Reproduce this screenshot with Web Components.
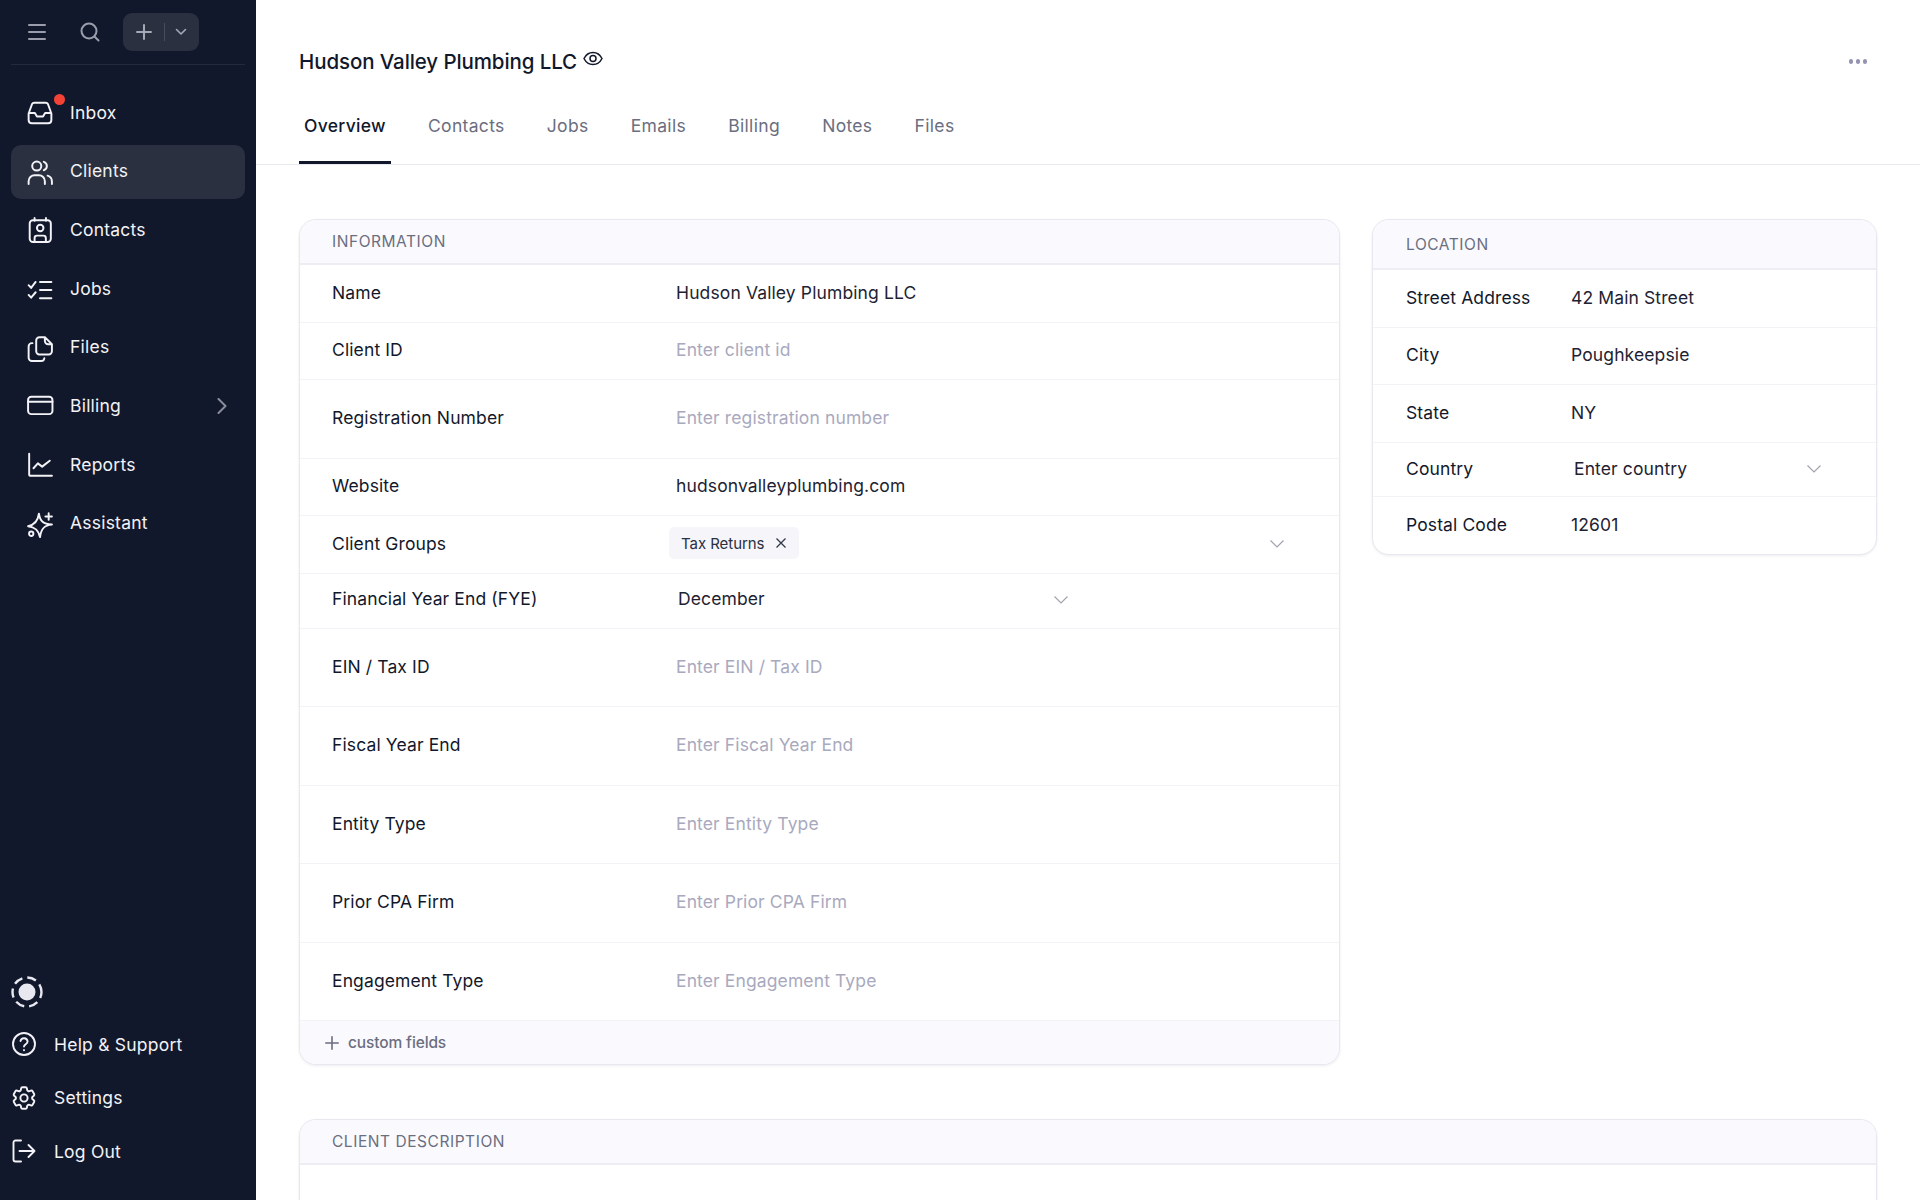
<!DOCTYPE html>
<html lang="en"><head><meta charset="utf-8"><title>Hudson Valley Plumbing LLC</title>
<style>
html,body{margin:0;height:100%;background:#fff;overflow:hidden}
body{font-family:Inter,"Noto Sans","Liberation Sans",sans-serif}
</style></head><body>
<app-shell>
  <side-nav slot="nav">
    <nav-item icon="inbox" dot>Inbox</nav-item>
    <nav-item icon="users" active>Clients</nav-item>
    <nav-item icon="contacts">Contacts</nav-item>
    <nav-item icon="jobs">Jobs</nav-item>
    <nav-item icon="files">Files</nav-item>
    <nav-item icon="card" chevron>Billing</nav-item>
    <nav-item icon="chart">Reports</nav-item>
    <nav-item icon="spark">Assistant</nav-item>
    <foot-item slot="foot" icon="help">Help &amp; Support</foot-item>
    <foot-item slot="foot" icon="gear">Settings</foot-item>
    <foot-item slot="foot" icon="logout">Log Out</foot-item>
  </side-nav>
  <page-head slot="head" title-text="Hudson Valley Plumbing LLC">
    <tab-item active>Overview</tab-item>
    <tab-item>Contacts</tab-item>
    <tab-item>Jobs</tab-item>
    <tab-item>Emails</tab-item>
    <tab-item>Billing</tab-item>
    <tab-item>Notes</tab-item>
    <tab-item>Files</tab-item>
  </page-head>
  <data-card heading="Information" head-h="45" pad="32" slot="info">
    <field-row label="Name" h="58">Hudson Valley Plumbing LLC</field-row>
    <field-row label="Client ID" h="57" placeholder>Enter client id</field-row>
    <field-row label="Registration Number" h="79" placeholder>Enter registration number</field-row>
    <field-row label="Website" h="57">hudsonvalleyplumbing.com</field-row>
    <field-row label="Client Groups" h="58" nudge="-7" caret="1277"><tag-chip>Tax Returns</tag-chip></field-row>
    <field-row label="Financial Year End (FYE)" h="55" nudge="2" up="5" caret="1061">December</field-row>
    <field-row label="EIN / Tax ID" h="78" placeholder>Enter EIN / Tax ID</field-row>
    <field-row label="Fiscal Year End" h="79" placeholder>Enter Fiscal Year End</field-row>
    <field-row label="Entity Type" h="78" placeholder>Enter Entity Type</field-row>
    <field-row label="Prior CPA Firm" h="79" placeholder>Enter Prior CPA Firm</field-row>
    <field-row label="Engagement Type" h="78" placeholder>Enter Engagement Type</field-row>
    <card-foot>custom fields</card-foot>
  </data-card>
  <data-card heading="Location" head-h="50" pad="33" slot="loc">
    <field-row label="Street Address" h="58" pad="33">42 Main Street</field-row>
    <field-row label="City" h="57" pad="33">Poughkeepsie</field-row>
    <field-row label="State" h="58" pad="33">NY</field-row>
    <field-row label="Country" h="54" pad="33" nudge="3" caret="1814">Enter country</field-row>
    <field-row label="Postal Code" h="57" pad="33" last>12601</field-row>
  </data-card>
  <data-card heading="Client Description" head-h="45" pad="32" slot="desc" style="height:200px"></data-card>
</app-shell>
<script>
const ICONS={
 inbox:'<path d="M1.500 12.500 4.600 3.900Q5.200 2.500 6.800 2.500H17.200Q18.800 2.500 19.400 3.900L22.500 12.500V18.500Q22.500 21.500 19.500 21.500H4.500Q1.500 21.500 1.500 18.500ZM1.800 12H7.300L9.200 15.200H14.800L16.700 12H22.200"/>',
 users:'<circle cx="9" cy="6.500" r="4.200"/><path d="M1.500 23V20.500A5.500 5.500 0 0 1 7 15H11A5.500 5.500 0 0 1 16.500 20.500V23M15.500 2.600A4.100 4.100 0 0 1 15.500 10.400M19 15.400A5.500 5.500 0 0 1 23 20.500V23"/>',
 contacts:'<rect x="2.500" y="3" width="19.500" height="20" rx="3"/><path d="M7 1V3.500M17.500 1V3.500"/><circle cx="12.200" cy="10.200" r="3"/><path d="M7 22.500V19.500Q7 17.200 9.200 17.200H15.200Q17.400 17.200 17.400 19.500V22.500"/>',
 jobs:'<path d="M1.500 8.500 3.800 11 8 5.500M1.500 17.500 3.800 20 8 15M12 5.500H22.500M12 13H22.500M12 20.500H22.500"/>',
 files:'<path d="M8.500 5A3 3 0 0 1 11.500 2H16.500L23 8.500V15A3 3 0 0 1 20 18H11.500A3 3 0 0 1 8.500 15ZM16.500 2V5.500A3 3 0 0 0 19.500 8.500H23M5 7.500H4.500A3 3 0 0 0 1.500 10.500V21A3 3 0 0 0 4.500 24H13A3 3 0 0 0 16 21.500"/>',
 card:'<rect x="1" y="3.500" width="22.500" height="16" rx="3"/><path d="M1 8H23.500"/>',
 chart:'<path d="M2 1.500V20.500A1.500 1.500 0 0 0 3.500 22H23M6 15 10 10.500 14 13.500 21 8"/>',
 spark:'<path d="M11 2.500C12 9.500 15 12 23 12.500C16 13 13 16.500 12 24C10.500 17.500 7.500 14.800 1 14C6.500 13 10 10 11 2.500Z"/><path d="M20 2V8M17 5H23"/><circle cx="3.900" cy="21" r="2"/>',
 help:'<circle cx="12" cy="12" r="11"/><path d="M8.500 9A3.600 3.600 0 0 1 15.600 9.500C15.600 12 12 12.300 12 14.500M12 18V18.200"/>',
 gear:'<g transform="translate(12 12) scale(1.200) translate(-12 -12)" stroke-width="1.600"><path d="M9.594 3.940c.09-.542.56-.94 1.110-.94h2.593c.55 0 1.020.398 1.110.94l.213 1.281c.063.374.313.686.645.870.074.040.147.083.22.127.325.196.72.257 1.075.124l1.217-.456a1.125 1.125 0 0 1 1.370.49l1.296 2.247a1.125 1.125 0 0 1-.26 1.431l-1.003.827c-.293.241-.438.613-.43.992a7.723 7.723 0 0 1 0 .255c-.008.378.137.75.43.991l1.004.827c.424.35.534.955.26 1.430l-1.298 2.247a1.125 1.125 0 0 1-1.369.491l-1.217-.456c-.355-.133-.75-.072-1.076.124a6.470 6.470 0 0 1-.22.128c-.331.183-.581.495-.644.869l-.213 1.281c-.09.543-.56.94-1.110.94h-2.594c-.55 0-1.019-.398-1.110-.94l-.213-1.281c-.062-.374-.312-.686-.644-.870a6.520 6.520 0 0 1-.22-.127c-.325-.196-.72-.257-1.076-.124l-1.217.456a1.125 1.125 0 0 1-1.369-.49l-1.297-2.247a1.125 1.125 0 0 1 .26-1.431l1.004-.827c.292-.24.437-.613.43-.991a6.932 6.932 0 0 1 0-.255c.007-.38-.138-.751-.43-.992l-1.004-.827a1.125 1.125 0 0 1-.26-1.430l1.297-2.247a1.125 1.125 0 0 1 1.370-.491l1.216.456c.356.133.751.072 1.076-.124.072-.044.146-.086.22-.128.332-.183.582-.495.644-.869l.214-1.280Z"/><circle cx="12" cy="12" r="3"/></g>',
 logout:'<path d="M9 1.500H3.500A2 2 0 0 0 1.500 3.500V20.500A2 2 0 0 0 3.500 22.500H9M7.500 12H22.500M16.500 6 22.500 12 16.500 18"/>'
};
function def(name,html,init){customElements.define(name,class extends HTMLElement{
  constructor(){super();this.attachShadow({mode:'open'}).innerHTML=html;}
  connectedCallback(){init&&init.call(this,this.shadowRoot);}
});}
const svg=(n,w=24,h=24,sw=2)=>`<svg width="${w}" height="${h}" viewBox="0 0 24 24" fill="none" stroke="currentColor" stroke-width="${sw}" stroke-linecap="round" stroke-linejoin="round" overflow="visible">${ICONS[n]}</svg>`;

def('app-shell',`<style>
:host{display:flex;width:1920px;height:1200px;overflow:hidden;background:#fff}
.nav{flex:0 0 256px;display:flex}
main{flex:1;min-width:0;display:flex;flex-direction:column}
.body{padding:54px 43px 0 43px;display:grid;grid-template-columns:1041px 505px;column-gap:32px;row-gap:54px;align-items:start}
.desc{grid-column:1/3}
</style><div class="nav"><slot name="nav"></slot></div>
<main><slot name="head"></slot><div class="body"><slot name="info"></slot><slot name="loc"></slot><div class="desc"><slot name="desc"></slot></div></div></main>`);

def('side-nav',`<style>
:host{display:flex;flex-direction:column;width:256px;height:1200px;background:#12182B;color:#F2F2F7;box-sizing:border-box}
.top{display:flex;align-items:center;height:65px;margin:0 11px;border-bottom:1px solid #232A3C;box-sizing:border-box;padding-left:17px}
.burger{width:18px;display:flex;flex-direction:column;gap:5px}
.burger i{display:block;height:2px;background:#9A9DAB;border-radius:1px}
.search{margin-left:33px;width:22px;height:22px;color:#9A9DAB;display:flex}
.add{margin-left:22px;width:76px;height:38px;border-radius:9px;background:#2A3040;display:flex;align-items:center;color:#A5A8B5}
.add .plus{width:41px;display:flex;justify-content:center}
.add .sep{width:1px;height:18px;background:#474C5B}
.add .ch{flex:1;display:flex;justify-content:center;padding-right:3px}
.items{display:flex;flex-direction:column;gap:4.700px;padding:21px 11px 0}
.foot{margin-top:auto;padding:0 0 29px}
.ring{padding:0 0 0 11px;height:32px;margin-bottom:16px;display:flex}
.footitems{display:flex;flex-direction:column;gap:13.300px}
</style>
<div class="top"><div class="burger"><i></i><i></i><i></i></div>
<div class="search"><svg width="22" height="22" viewBox="0 0 22 22" fill="none" stroke="currentColor" stroke-width="2" stroke-linecap="round"><circle cx="10" cy="10" r="7.500"/><path d="M15.700 15.700 19.500 19.500"/></svg></div>
<div class="add"><div class="plus"><svg width="16" height="16" viewBox="0 0 16 16" stroke="currentColor" stroke-width="2" stroke-linecap="round"><path d="M8 1V15M1 8H15"/></svg></div><div class="sep"></div><div class="ch"><svg width="12" height="8" viewBox="0 0 12 8" fill="none" stroke="currentColor" stroke-width="1.600" stroke-linecap="round" stroke-linejoin="round"><path d="M1.500 1.500 6 6 10.500 1.500"/></svg></div></div></div>
<div class="items"><slot></slot></div>
<div class="foot"><div class="ring"><svg width="32" height="32" viewBox="0 0 32 32" fill="none"><circle cx="16" cy="16" r="14.500" stroke="#E8E8F0" stroke-width="2.400" stroke-dasharray="9.200 5.040" stroke-dashoffset="3"/><circle cx="16" cy="16" r="8.500" fill="#E8E8F0"/></svg></div><div class="footitems"><slot name="foot"></slot></div></div>`);

def('nav-item',`<style>
:host{display:flex;align-items:center;height:54px;box-sizing:border-box;padding:0 0 2px 15.500px;border-radius:10px;position:relative;font-size:17.500px;font-weight:400;letter-spacing:.22px}
:host([active]){background:#2A3040}
.ic{width:26px;height:26px;margin-top:2px;margin-right:17.500px;display:flex}
.dot{position:absolute;left:43px;top:8px;width:11px;height:11px;border-radius:50%;background:#F44336}
.ch{position:absolute;left:206px;top:19px;color:#8A8D9C;display:flex}
</style><span class="ic"></span><slot></slot>`,function(r){
  r.querySelector('.ic').innerHTML=svg(this.getAttribute('icon'),26,26,1.8);
  if(this.hasAttribute('dot')&&!r.querySelector('.dot')){r.appendChild(Object.assign(document.createElement('span'),{className:'dot'}));}
  if(this.hasAttribute('chevron')&&!r.querySelector('.ch')){const s=document.createElement('span');s.className='ch';s.innerHTML='<svg width="10" height="16" viewBox="0 0 10 16" fill="none" stroke="currentColor" stroke-width="2" stroke-linecap="round" stroke-linejoin="round"><path d="M1.500 1 8.500 8 1.500 15"/></svg>';r.appendChild(s);}
});

def('foot-item',`<style>
:host{display:flex;align-items:center;height:40px;padding-left:12px;font-size:17.500px;letter-spacing:.22px}
.ic{width:24px;height:24px;margin-right:18px;display:flex}
</style><span class="ic"></span><slot></slot>`,function(r){r.querySelector('.ic').innerHTML=svg(this.getAttribute('icon'),24,24,1.9);});

def('page-head',`<style>
:host{display:block;height:165px;box-sizing:border-box;border-bottom:1px solid #E9E9F0;padding:0 43px;position:relative}
.t{display:flex;align-items:flex-start;height:94px;padding-top:48px;box-sizing:border-box;font-size:20.500px;font-weight:500;color:#12182B;line-height:28px;letter-spacing:-.1px}
.eye{margin:2px 0 0 6px;color:#12182B;display:flex}
.more{position:absolute;right:53px;top:59px;display:flex;gap:2.500px}
.more i{width:4.500px;height:4.500px;border-radius:50%;background:#9494B0}
.tabs{display:flex;gap:32.200px;height:70px}
</style><div class="t"><span id="t"></span><span class="eye"><svg width="20" height="20" viewBox="0 0 20 20" fill="none" stroke="currentColor" stroke-width="1.500"><path d="M1 8.500C3 4.500 6.200 2.500 10 2.500S17 4.500 19 8.500C17 12.500 13.800 14.500 10 14.500S3 12.500 1 8.500Z"/><circle cx="10" cy="8.500" r="3"/></svg></span></div>
<div class="more"><i></i><i></i><i></i></div><div class="tabs"><slot></slot></div>`,function(r){r.getElementById('t').textContent=this.getAttribute('title-text');});

def('tab-item',`<style>
:host{display:flex;align-items:flex-start;padding:21px 5px 0;box-sizing:border-box;height:70px;font-size:17.500px;color:#6B6E80;line-height:22px;letter-spacing:.32px}
:host([active]){color:#12182B;font-weight:500;letter-spacing:.3px;box-shadow:inset 0 -3px 0 #12182B}
</style><slot></slot>`);

def('data-card',`<style>
:host{display:block;background:#fff;border:1px solid #E8E8F0;border-radius:17px;box-shadow:0 1px 3px rgba(30,30,70,.08);overflow:hidden;box-sizing:border-box}
.h{display:flex;align-items:center;background:#FAFAFE;border-bottom:2px solid #EDEDF3;box-sizing:border-box;font-size:15.500px;letter-spacing:.55px;text-transform:uppercase;color:#6B6E80}
</style><div class="h"></div><slot></slot>`,function(r){const h=r.querySelector('.h');h.textContent=this.getAttribute('heading');h.style.height=this.getAttribute('head-h')+'px';h.style.paddingLeft=this.getAttribute('pad')+'px';});

def('field-row',`<style>
:host{display:flex;align-items:center;box-sizing:border-box;border-bottom:1px solid #F2F2F7;font-size:17.500px;color:#1E2233;letter-spacing:.12px;position:relative}
:host([last]){border-bottom:0}
.l{flex:0 0 auto;color:#12182B}
:host([placeholder]) .v{color:#A9A9BE}
.c{position:absolute;top:50%;margin-top:-5px;color:#A3A3AE;display:flex}
.v{display:flex;align-items:center}
</style><span class="l"></span><span class="v"><slot></slot></span><span class="c"></span>`,function(r){
  const inLoc=!!this.closest('[slot=loc]');
  const pad=inLoc?33:32;
  this.style.paddingLeft=pad+'px';
  this.style.paddingBottom=(this.getAttribute('up')||2.4)+'px';
  this.style.height=this.getAttribute('h')+'px';
  r.querySelector('.l').textContent=this.getAttribute('label');
  r.querySelector('.l').style.width=(inLoc?165:344)+'px';
  const n=+(this.getAttribute('nudge')||0);r.querySelector('.v').style.marginLeft=n+'px';
  const c=this.getAttribute('caret');
  if(c){const cardLeft=inLoc?1373:300;const e=r.querySelector('.c');e.style.left=(+c-cardLeft-7)+'px';e.innerHTML='<svg width="14" height="8" viewBox="0 0 14 8" fill="none" stroke="currentColor" stroke-width="1.200"><path d="M.500 .500 7 7 13.500 .500"/></svg>';}
});

def('tag-chip',`<style>
:host{display:inline-flex;align-items:center;height:32px;padding:0 12px 0 12px;background:#F5F5FA;border-radius:5px;font-size:15px;color:#2B2F40;gap:11px;letter-spacing:-.05px}
</style><slot></slot><svg width="12" height="12" viewBox="0 0 12 12" stroke="#33374A" stroke-width="1.300"><path d="M1.500 1.500 10.500 10.500M10.500 1.500 1.500 10.500"/></svg>`);

def('card-foot',`<style>
:host{display:flex;align-items:center;height:43px;background:#FAFAFE;padding-left:25px;font-size:15.500px;font-weight:500;color:#6B6E80;gap:9px;letter-spacing:-.13px}
</style><svg width="14" height="14" viewBox="0 0 14 14" stroke="#6B6E80" stroke-width="1.600" stroke-linecap="round"><path d="M7 .800V13.200M.800 7H13.200"/></svg><slot></slot>`);
</script>
</body></html>
